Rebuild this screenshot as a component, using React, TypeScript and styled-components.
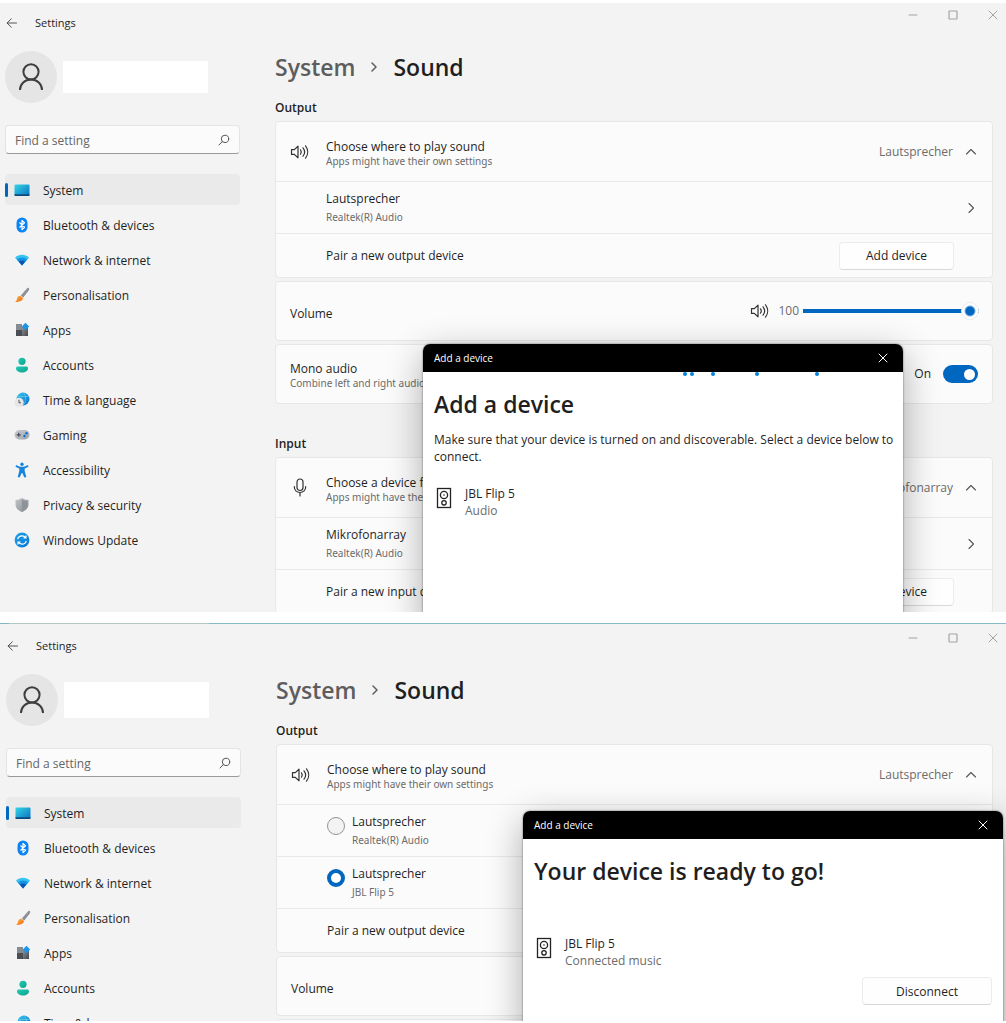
import React, { useId, useState } from "react";
import styled, { createGlobalStyle, css } from "styled-components";

const GlobalStyle = createGlobalStyle`
  *, *::before, *::after { box-sizing: border-box; }
  body {
    margin: 0;
    background: #ffffff;
    color: #1f1f1f;
    font-family: "Open Sans", "Noto Sans", sans-serif;
    font-size: 12px;
    line-height: 16px;
  }
  h1, h2, p { margin: 0; }
  button, input { font: inherit; color: inherit; }
`;

/* ---------- page and window frames ---------- */

const Page = styled.div`
  height: 100vh;
  display: grid;
  grid-template-rows: minmax(0, 609fr) minmax(0, 398fr);
  gap: 11px;
  padding: 3px 0 2px;
`;

const Frame = styled.section<{ $second?: boolean }>`
  position: relative;
  overflow: hidden;
  background: #f3f3f3;
  ${(p) =>
    p.$second &&
    css`
      padding: 3px 0 0 1px;
      background: linear-gradient(
            to right,
            #7fb6c4 9px,
            #b4c6c0 9px 209px,
            #86bac6 209px
          )
          top / 100% 1px no-repeat,
        #f3f3f3;
    `}
`;

const TitleBar = styled.header`
  height: 40px;
  display: flex;
  justify-content: space-between;
  align-items: flex-start;
`;

const TitleLeft = styled.div`
  height: 40px;
  display: flex;
  align-items: center;
  gap: 17px;
  padding-left: 6px;
  font-size: 11px;
`;

const WindowControls = styled.div`
  display: flex;
  gap: 14px;
`;

const BareButton = styled.button`
  border: 0;
  padding: 0;
  background: transparent;
  display: flex;
  align-items: center;
  justify-content: center;
`;

const ControlButton = styled(BareButton)`
  width: 26px;
  height: 24px;
  color: #a3a3a3;
`;

const Body = styled.div`
  display: grid;
  grid-template-columns: 235px minmax(0, 1fr);
  gap: 35px;
  padding: 8px 13px 0 5px;
`;

/* ---------- sidebar ---------- */

const User = styled.div`
  height: 52px;
  display: flex;
  align-items: center;
  gap: 6px;
`;

const Avatar = styled.div`
  width: 52px;
  height: 52px;
  border-radius: 50%;
  background: #e5e5e5;
  display: flex;
  align-items: center;
  justify-content: center;
`;

const NameBox = styled.div<{ $tall?: boolean }>`
  width: 145px;
  height: ${(p) => (p.$tall ? 36 : 32)}px;
  background: #ffffff;
`;

const SearchBox = styled.div`
  margin: 22px 0 20px;
  height: 29px;
  display: flex;
  align-items: center;
  padding: 0 9px;
  background: #fbfbfb;
  border: 1px solid #e4e4e4;
  border-bottom-color: #9a9a9a;
  border-radius: 4px;
`;

const SearchInput = styled.input`
  flex: 1;
  min-width: 0;
  border: 0;
  padding: 2px 0 0;
  outline: 0;
  background: transparent;
  &::placeholder {
    color: #666666;
    opacity: 1;
  }
`;

const Nav = styled.nav`
  display: flex;
  flex-direction: column;
  gap: 4px;
`;

const NavLink = styled.a<{ $active?: boolean }>`
  height: 31px;
  display: flex;
  align-items: center;
  padding-left: ${(p) => (p.$active ? 0 : 9)}px;
  border-radius: 4px;
  color: #1f1f1f;
  text-decoration: none;
  white-space: nowrap;
  ${(p) =>
    p.$active &&
    css`
      background: #eaeaea;
      &::before {
        content: "";
        width: 3px;
        height: 14px;
        margin-right: 6px;
        border-radius: 2px;
        background: #0067c0;
      }
    `}
`;

const NavText = styled.span`
  padding: 2px 0 0 13px;
`;

/* ---------- main column ---------- */

const Breadcrumb = styled.h1`
  display: flex;
  align-items: center;
  gap: 14px;
  margin-bottom: 14px;
  font-size: 23px;
  line-height: 32px;
  font-weight: 600;
`;

const Crumb = styled.a`
  color: #5d5d5d;
  text-decoration: none;
`;

const SectionTitle = styled.h2<{ $spaced?: boolean }>`
  margin: ${(p) => (p.$spaced ? 29 : 0)}px 0 2px;
  font-size: 12px;
  line-height: 22px;
  font-weight: 600;
`;

const Stack = styled.div`
  display: flex;
  flex-direction: column;
  gap: 3px;
`;

const Card = styled.div`
  background: #fbfbfb;
  border: 1px solid #e7e7e7;
  border-radius: 4px;
`;

const Row = styled.div<{ $kind?: "head" | "device" | "pair" | "single" }>`
  display: flex;
  align-items: center;
  padding: 0 14px;
  height: ${(p) =>
    ({ head: 59, device: 52, pair: 44, single: 58 })[p.$kind ?? "single"]}px;
  ${(p) =>
    (p.$kind === "device" || p.$kind === "pair") &&
    css`
      padding-left: 50px;
      border-top: 1px solid #e9e9e9;
    `}
`;

const IconSlot = styled.span`
  width: 20px;
  margin-right: 16px;
  display: flex;
  justify-content: center;
`;

const Texts = styled.div<{ $loose?: boolean; $lower?: boolean }>`
  flex: 1;
  min-width: 0;
  padding-top: ${(p) => (p.$lower ? 4 : 0)}px;
  line-height: ${(p) => (p.$loose ? 18 : 15)}px;
  white-space: nowrap;
`;

const Sub = styled.div`
  font-family: "Noto Sans", sans-serif;
  font-size: 10px;
  color: #6b6b6b;
`;

const Value = styled.span`
  color: #6b6b6b;
`;

const Toggler = styled(BareButton)`
  gap: 11px;
  color: #444444;
`;

const PushButton = styled.button<{ $wide?: boolean }>`
  width: ${(p) => (p.$wide ? 130 : 115)}px;
  height: 28px;
  padding: 0;
  background: #fefefe;
  border: 1px solid #ececec;
  border-bottom-color: #d8d8d8;
  border-radius: 4px;
`;

const PairButton = styled(PushButton)`
  margin-right: 24px;
`;

const Radio = styled.input`
  appearance: none;
  width: 18px;
  height: 18px;
  margin: 0 7px 10px 0;
  border: 1px solid #949494;
  border-radius: 50%;
  background: #f3f3f3;
  &:checked {
    border: 4px solid #0067c0;
    background: #ffffff;
  }
`;

const VolumeGroup = styled.div`
  display: flex;
  align-items: center;
  gap: 8px;
`;

const VolumeLevel = styled.output`
  color: #6b6b6b;
`;

const Slider = styled.input`
  appearance: none;
  width: 176px;
  height: 18px;
  margin: 0 -1px 0 -4px;
  background: linear-gradient(#0067c0, #0067c0) center / 100% 4px no-repeat;
  &::-webkit-slider-thumb {
    appearance: none;
    width: 18px;
    height: 18px;
    border-radius: 50%;
    border: 1px solid #ececec;
    background: radial-gradient(circle, #0067c0 4px, #ffffff 6px);
  }
`;

const SwitchLabel = styled.label`
  display: flex;
  align-items: center;
  gap: 12px;
`;

const Switch = styled.input`
  appearance: none;
  width: 35px;
  height: 18px;
  margin: 0;
  border-radius: 9px;
  background: #8a8a8a;
  display: flex;
  align-items: center;
  padding: 0 3px;
  &::before {
    content: "";
    width: 11px;
    height: 11px;
    border-radius: 50%;
    background: #ffffff;
  }
  &:checked {
    background: #0067c0;
    justify-content: flex-end;
  }
`;

/* ---------- pairing dialog ---------- */

const Dialog = styled.div<{ $top: number; $right: number }>`
  position: absolute;
  top: ${(p) => p.$top}px;
  right: ${(p) => p.$right}px;
  bottom: -20px;
  width: 480px;
  background: #ffffff;
  border-radius: 7px 7px 0 0;
  box-shadow: 0 0 2px rgba(0, 0, 0, 0.6), 0 10px 36px rgba(0, 0, 0, 0.32);
`;

const DialogBar = styled.div`
  height: 28px;
  display: flex;
  align-items: center;
  justify-content: space-between;
  padding: 0 8px 0 11px;
  background: #000000;
  color: #ffffff;
  font-size: 10px;
  border-radius: 7px 7px 0 0;
`;

const DialogClose = styled(BareButton)`
  width: 24px;
  height: 24px;
  color: #ffffff;
`;

const Progress = styled.div`
  height: 4px;
  display: flex;
  padding-left: 260px;
`;

const Dot = styled.i`
  width: 4px;
  height: 4px;
  border-radius: 50%;
  background: #0082e0;
`;

const DialogBody = styled.div`
  padding: 12px 0 0 11px;
  line-height: 17px;
`;

const DialogTitle = styled.h2`
  font-size: 23px;
  line-height: 32px;
  font-weight: 600;
`;

const Hint = styled.p`
  margin-top: 11px;
`;

const Found = styled.div<{ $gap: number }>`
  display: flex;
  align-items: flex-start;
  gap: 13px;
  margin-top: ${(p) => p.$gap}px;
  padding-left: 2px;
  & > svg {
    margin-top: 2px;
  }
`;

const Actions = styled.div`
  display: flex;
  justify-content: flex-end;
  margin-top: 8px;
  padding-right: 11px;
`;

/* ---------- icons ---------- */

const Defs = styled.svg`
  position: absolute;
  width: 0;
  height: 0;
`;

function Gradients() {
  const g = (id: string, a: string, b: string) => (
    <linearGradient id={id} x1="0" y1="0" x2="1" y2="1">
      <stop offset="0" stopColor={a} />
      <stop offset="1" stopColor={b} />
    </linearGradient>
  );
  return (
    <Defs aria-hidden="true">
      <defs>
        {g("g-screen", "#35d6e6", "#0a6fc2")}
        {g("g-teal", "#1fcdb5", "#14a08e")}
        {g("g-globe", "#35c8e8", "#0a6cd0")}
        {g("g-handle", "#b9bec4", "#62676d")}
        {g("g-tip", "#ffb23e", "#ee6a14")}
        {g("g-shield", "#c3c7cb", "#84898f")}
        {g("g-pad", "#c9cdd2", "#9da3aa")}
        {g("g-update", "#1fa4ea", "#0874d1")}
        {g("g-tile", "#8d9299", "#45494e")}
      </defs>
    </Defs>
  );
}

const line = {
  fill: "none",
  stroke: "currentColor",
  strokeLinecap: "round",
  strokeLinejoin: "round",
} as const;

const Back = () => (
  <svg width="12" height="12" viewBox="0 0 12 12" {...line} stroke="#555">
    <path d="M10.500 6H1.200M5.300 1.800 1 6l4.300 4.200" />
  </svg>
);
const Minus = () => (
  <svg width="10" height="10" viewBox="0 0 10 10" {...line}>
    <path d="M1 5h8" />
  </svg>
);
const Square = () => (
  <svg width="10" height="10" viewBox="0 0 10 10" {...line}>
    <rect x="1" y="1" width="8" height="8" rx="0.8" strokeWidth="1.2" />
  </svg>
);
const Cross = () => (
  <svg width="10" height="10" viewBox="0 0 10 10" {...line}>
    <path d="m1 1 8 8M9 1 1 9" />
  </svg>
);
const Person = () => (
  <svg width="30" height="30" viewBox="0 0 30 30" {...line} stroke="#3f3f3f" strokeWidth="2" strokeLinecap="butt">
    <circle cx="15" cy="9.800" r="7.600" />
    <path d="M4 28c0-6 4.900-10.500 11-10.500S26 22 26 28" />
  </svg>
);
const Lens = () => (
  <svg width="12" height="12" viewBox="0 0 12 12" {...line} stroke="#555">
    <circle cx="7" cy="4.900" r="3.700" />
    <path d="M4.300 7.600 1 11" />
  </svg>
);
const Chevron = ({ dir }: { dir: "up" | "right" }) => (
  <svg width="14" height="12" viewBox="0 0 14 12" {...line} stroke="#555" strokeWidth="1.100">
    <path d={dir === "up" ? "M2.500 8 7 3.500 11.500 8" : "M5 1.500 9.500 6 5 10.500"} />
  </svg>
);
const CrumbChevron = () => (
  <svg width="10" height="12" viewBox="0 0 10 12" {...line} stroke="#5d5d5d" strokeWidth="1.500">
    <path d="M3 2l4 4-4 4" />
  </svg>
);
const Speaker = () => (
  <svg width="20" height="18" viewBox="0 0 20 18" {...line} stroke="#333" strokeWidth="1.200">
    <path d="M1.500 6.600h2.800L8 3.200v11.600l-3.700-3.400H1.500z" />
    <path d="M10.500 6.800c1 1.400 1 3 0 4.400M13 4.800c2 2.500 2 5.900 0 8.400M15.500 2.800c2.900 3.700 2.900 8.700 0 12.400" />
  </svg>
);
const Mic = () => (
  <svg width="16" height="20" viewBox="0 0 16 20" {...line} stroke="#333" strokeWidth="1.200">
    <rect x="5" y="1" width="6" height="11.500" rx="3" />
    <path d="M2.300 8.500c0 3.600 2.400 6 5.700 6s5.700-2.400 5.700-6M8 14.500V18" />
  </svg>
);
const SpeakerBox = () => (
  <svg width="16" height="22" viewBox="0 0 16 22" fill="none" stroke="#222" strokeWidth="1.300">
    <rect x="1.500" y="1.500" width="13" height="19" />
    <circle cx="8" cy="8" r="3.600" />
    <circle cx="8" cy="15.800" r="2.200" />
    <circle cx="8" cy="8" r="0.800" fill="#222" stroke="none" />
  </svg>
);

const navIcons: Record<string, React.ReactNode> = {
  System: (
    <>
      <rect x="0.500" y="2.500" width="15" height="11.500" rx="1" fill="url(#g-screen)" />
      <path d="M0.500 12.300h15v.7a1 1 0 0 1-1 1h-13a1 1 0 0 1-1-1z" fill="#0b4a7d" />
    </>
  ),
  "Bluetooth & devices": (
    <>
      <rect x="2.500" y="0.500" width="11" height="15" rx="5.500" fill="#0a84f4" />
      <path d="m5.500 5.500 5 4.800L8 12.600V3.400l2.500 2.300-5 4.800" fill="none" stroke="#fff" strokeWidth="1.200" strokeLinejoin="round" />
    </>
  ),
  "Network & internet": (
    <>
      <path d="M1 5.700C5 1.900 11 1.900 15 5.700L8 13.500z" fill="#35c3f2" />
      <path d="M2.800 7.500c3-2.700 7.400-2.700 10.400 0L8 13.500z" fill="#1792e0" />
      <path d="M4.800 9.500c2-1.500 4.400-1.500 6.400 0L8 13.500z" fill="#0a55ae" />
    </>
  ),
  Personalisation: (
    <>
      <path d="M14.800 1c.8.600.3 1.800-.3 2.700l-5.300 6.900-2.500-2 5.700-6.500c.8-.9 1.700-1.600 2.400-1.100z" fill="url(#g-handle)" />
      <path d="M6.200 8.800 9 11c-.2 2.400-2.700 4-8 4 1.600-1 1.700-2 2-3.300.4-1.700 1.600-2.900 3.200-2.900z" fill="url(#g-tip)" />
    </>
  ),
  Apps: (
    <>
      <rect x="2" y="2" width="6" height="6" fill="#868b91" />
      <rect x="2" y="8" width="6" height="6" fill="#4a4e53" />
      <rect x="8" y="4" width="6" height="10" fill="url(#g-tile)" />
      <path d="m11.500.8 3.700 3.700-3.700 3.700-3.700-3.700z" fill="#1b95e8" />
    </>
  ),
  Accounts: (
    <>
      <circle cx="8" cy="4.300" r="3.600" fill="url(#g-teal)" />
      <path d="M2 11.300C2 10 2.700 9.500 4 9.500h8c1.300 0 2 .5 2 1.800 0 2.700-2.600 4.200-6 4.200s-6-1.500-6-4.200z" fill="url(#g-teal)" />
    </>
  ),
  "Time & language": (
    <>
      <circle cx="9" cy="7" r="6.500" fill="url(#g-globe)" />
      <path d="M4 4.500h10.500M9 .5c3.500 3 3.500 9.500 0 13" fill="none" stroke="#6fd4ee" strokeWidth="0.600" />
      <circle cx="5" cy="10.500" r="4.700" fill="#e6e6e8" />
      <path d="M5 7.900v2.900h2" fill="none" stroke="#555" />
    </>
  ),
  Gaming: (
    <>
      <rect x="0.500" y="3" width="15" height="9.500" rx="4.700" fill="url(#g-pad)" />
      <path d="M4.700 5.800v4M2.700 7.800h4" stroke="#4a4e53" strokeWidth="1.200" />
      <circle cx="12.500" cy="6.300" r="1.200" fill="#0a6cd0" />
      <circle cx="10.500" cy="9" r="1.200" fill="#0a6cd0" />
    </>
  ),
  Accessibility: (
    <>
      <circle cx="8" cy="2.200" r="1.700" fill="#1785dd" />
      <path d="M2.200 2.900c1.900 1.300 3.700 1.900 5.800 1.900s3.900-.6 5.800-1.900l.8 1.500c-1.400.9-2.500 1.600-3.900 2v2.700l1.600 5.800-1.900.5L8.300 11h-.6l-2.100 4.400-1.900-.5 1.600-5.800V6.400c-1.400-.4-2.500-1.100-3.900-2z" fill="#1785dd" />
    </>
  ),
  "Privacy & security": (
    <>
      <path d="M8 1c1.900 1.300 4 2 6.500 2v4.500c0 3.500-2.500 6-6.500 7.700C4 13.500 1.500 11 1.500 7.500V3C4 3 6.100 2.300 8 1z" fill="url(#g-shield)" />
      <path d="M8 2.500v11.200c3-1.400 5.200-3.400 5.200-6.200V4.100C11.300 4 9.600 3.500 8 2.500z" fill="#8d9298" />
    </>
  ),
  "Windows Update": (
    <>
      <circle cx="8" cy="8" r="7.400" fill="url(#g-update)" />
      <path d="M3.700 7.200C4.300 5 6 3.900 8 3.900c1.600 0 2.900.7 3.800 1.900M12.300 8.800c-.6 2.200-2.300 3.300-4.300 3.300-1.600 0-2.900-.7-3.800-1.900M12 3.500V6H9.500M4 12.500V10h2.500" fill="none" stroke="#fff" strokeWidth="1.200" />
    </>
  ),
};

/* ---------- shared pieces ---------- */

function Sidebar({ tallName }: { tallName?: boolean }) {
  return (
    <aside>
      <User>
        <Avatar>
          <Person />
        </Avatar>
        <NameBox $tall={tallName} />
      </User>
      <SearchBox>
        <SearchInput type="text" placeholder="Find a setting" aria-label="Find a setting" />
        <Lens />
      </SearchBox>
      <Nav>
        {Object.entries(navIcons).map(([name, icon]) => (
          <NavLink key={name} href="#" $active={name === "System"}>
            <svg width="16" height="16" viewBox="0 0 16 16" aria-hidden="true">
              {icon}
            </svg>
            <NavText>{name}</NavText>
          </NavLink>
        ))}
      </Nav>
    </aside>
  );
}

function SettingsWindow({
  second,
  children,
  dialog,
}: {
  second?: boolean;
  children: React.ReactNode;
  dialog: React.ReactNode;
}) {
  return (
    <Frame $second={second}>
      <TitleBar>
        <TitleLeft>
          <BareButton aria-label="Back">
            <Back />
          </BareButton>
          Settings
        </TitleLeft>
        <WindowControls>
          <ControlButton aria-label="Minimise">
            <Minus />
          </ControlButton>
          <ControlButton aria-label="Maximise">
            <Square />
          </ControlButton>
          <ControlButton aria-label="Close">
            <Cross />
          </ControlButton>
        </WindowControls>
      </TitleBar>
      <Body>
        <Sidebar tallName={second} />
        <main>
          <Breadcrumb>
            <Crumb href="#">System</Crumb>
            <CrumbChevron />
            Sound
          </Breadcrumb>
          {children}
        </main>
      </Body>
      {dialog}
    </Frame>
  );
}

function HeadRow({ icon, title, value }: { icon: React.ReactNode; title: string; value: string }) {
  return (
    <Row $kind="head">
      <IconSlot>{icon}</IconSlot>
      <Texts $lower>
        {title}
        <Sub>Apps might have their own settings</Sub>
      </Texts>
      <Toggler aria-label={`${title}: ${value}`} aria-expanded="true">
        <Value>{value}</Value>
        <Chevron dir="up" />
      </Toggler>
    </Row>
  );
}

function DeviceRow({ name }: { name: string }) {
  return (
    <Row $kind="device">
      <Texts $loose>
        {name}
        <Sub>Realtek(R) Audio</Sub>
      </Texts>
      <BareButton aria-label={`${name} properties`}>
        <Chevron dir="right" />
      </BareButton>
    </Row>
  );
}

function ChoiceRow({ detail, defaultChecked }: { detail: string; defaultChecked?: boolean }) {
  const id = useId();
  return (
    <Row $kind="device">
      <Radio type="radio" name="output" id={id} defaultChecked={defaultChecked} />
      <Texts as="label" htmlFor={id} $loose>
        Lautsprecher
        <Sub>{detail}</Sub>
      </Texts>
    </Row>
  );
}

function PairRow({ kind }: { kind: string }) {
  return (
    <Row $kind="pair">
      <Texts>Pair a new {kind} device</Texts>
      <PairButton>Add device</PairButton>
    </Row>
  );
}

function VolumeCard() {
  const id = useId();
  const [level, setLevel] = useState(100);
  return (
    <Card>
      <Row>
        <Texts as="label" htmlFor={id} $lower>
          Volume
        </Texts>
        <VolumeGroup>
          <Speaker />
          <VolumeLevel htmlFor={id}>{level}</VolumeLevel>
          <Slider
            id={id}
            type="range"
            min={0}
            max={100}
            value={level}
            onChange={(e) => setLevel(Number(e.target.value))}
          />
        </VolumeGroup>
      </Row>
    </Card>
  );
}

function MonoCard() {
  return (
    <Card>
      <Row>
        <Texts $lower>
          Mono audio
          <Sub>Combine left and right audio channels into one</Sub>
        </Texts>
        <SwitchLabel>
          On
          <Switch type="checkbox" role="switch" aria-label="Mono audio" defaultChecked />
        </SwitchLabel>
      </Row>
    </Card>
  );
}

function PairDialog({
  top,
  right,
  searching,
  title,
  hint,
  status,
  action,
}: {
  top: number;
  right: number;
  searching?: boolean;
  title: string;
  hint?: string;
  status: string;
  action?: string;
}) {
  return (
    <Dialog role="dialog" aria-label={title} $top={top} $right={right}>
      <DialogBar>
        Add a device
        <DialogClose aria-label="Close">
          <Cross />
        </DialogClose>
      </DialogBar>
      <Progress>
        {searching &&
          [0, 3, 17, 40, 56].map((gap) => <Dot key={gap} style={{ marginLeft: gap }} />)}
      </Progress>
      <DialogBody>
        <DialogTitle>{title}</DialogTitle>
        {hint && <Hint>{hint}</Hint>}
        <Found $gap={hint ? 20 : 48}>
          <SpeakerBox />
          <div>
            JBL Flip 5
            <div>
              <Value>{status}</Value>
            </div>
          </div>
        </Found>
        {action && (
          <Actions>
            <PushButton $wide>{action}</PushButton>
          </Actions>
        )}
      </DialogBody>
    </Dialog>
  );
}

export default function App() {
  return (
    <>
      <GlobalStyle />
      <Gradients />
      <Page>
        <SettingsWindow
          dialog={
            <PairDialog
              top={341}
              right={103}
              searching
              title="Add a device"
              hint="Make sure that your device is turned on and discoverable. Select a device below to connect."
              status="Audio"
            />
          }
        >
          <SectionTitle>Output</SectionTitle>
          <Stack>
            <Card>
              <HeadRow icon={<Speaker />} title="Choose where to play sound" value="Lautsprecher" />
              <DeviceRow name="Lautsprecher" />
              <PairRow kind="output" />
            </Card>
            <VolumeCard />
            <MonoCard />
          </Stack>
          <SectionTitle $spaced>Input</SectionTitle>
          <Card>
            <HeadRow icon={<Mic />} title="Choose a device for speaking or recording" value="Mikrofonarray" />
            <DeviceRow name="Mikrofonarray" />
            <PairRow kind="input" />
          </Card>
        </SettingsWindow>

        <SettingsWindow
          second
          dialog={
            <PairDialog
              top={188}
              right={3}
              title="Your device is ready to go!"
              status="Connected music"
              action="Disconnect"
            />
          }
        >
          <SectionTitle>Output</SectionTitle>
          <Stack>
            <Card>
              <HeadRow icon={<Speaker />} title="Choose where to play sound" value="Lautsprecher" />
              <ChoiceRow detail="Realtek(R) Audio" />
              <ChoiceRow detail="JBL Flip 5" defaultChecked />
              <PairRow kind="output" />
            </Card>
            <VolumeCard />
            <MonoCard />
          </Stack>
        </SettingsWindow>
      </Page>
    </>
  );
}
